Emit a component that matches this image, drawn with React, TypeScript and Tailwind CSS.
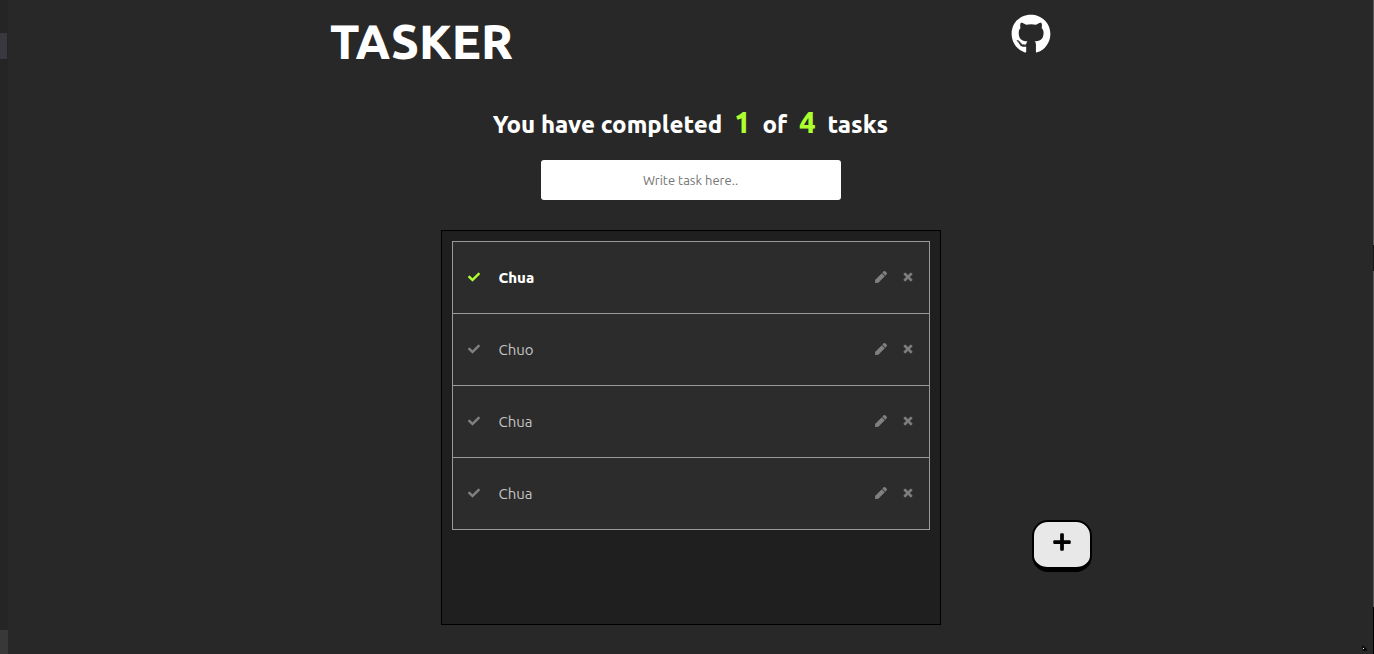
import { useState } from "react";
import { FaCheck, FaGithub, FaPen, FaPlus, FaTimes } from "react-icons/fa";

type Task = { id: number; name: string; done: boolean };

const initialTasks: Task[] = [
  { id: 1, name: "Chua", done: true },
  { id: 2, name: "Chuo", done: false },
  { id: 3, name: "Chua", done: false },
  { id: 4, name: "Chua", done: false },
];

function TaskRow({
  task,
  onToggle,
  onRemove,
}: {
  task: Task;
  onToggle: () => void;
  onRemove: () => void;
}) {
  return (
    <li className="flex h-[72px] items-center border-b border-[#999] bg-[#2c2c2c] px-[15px]">
      <button
        type="button"
        aria-label="Complete task"
        onClick={onToggle}
        className={task.done ? "pb-0.5 text-[#adff2f]" : "pb-0.5 text-[#808080]"}
      >
        <FaCheck size={12} />
      </button>
      <span
        className={
          task.done
            ? "ml-[19px] flex-1 pt-0.5 text-[15px] font-extrabold text-white"
            : "ml-[19px] flex-1 pt-0.5 text-[15px] text-[#c4c4c4]"
        }
      >
        {task.name}
      </span>
      <div className="flex items-center gap-[15px] pb-0.5 text-[#808080]">
        <button type="button" aria-label="Edit task">
          <FaPen size={12} />
        </button>
        <button type="button" aria-label="Delete task" onClick={onRemove}>
          <FaTimes size={12} strokeWidth={24} className="overflow-visible" />
        </button>
      </div>
    </li>
  );
}

export default function App() {
  const [tasks, setTasks] = useState(initialTasks);
  const [draft, setDraft] = useState("");
  const completed = tasks.filter((task) => task.done).length;

  const addTask = () => {
    if (!draft.trim()) return;
    setTasks([...tasks, { id: Date.now(), name: draft, done: false }]);
    setDraft("");
  };

  return (
    <div className="flex min-h-screen bg-[#282828] font-['Ubuntu','Noto_Sans',sans-serif] text-white">
      <div className="flex w-2 flex-col justify-between bg-[#252525] pt-[33px]">
        <div className="h-[26px] w-[7px] bg-[#39383e]" />
        <div className="h-6 bg-[#383838]" />
      </div>

      <div className="relative flex min-w-0 flex-1 flex-col pb-[29px]">
        <header className="mx-auto flex h-[84px] w-full max-w-[721px] items-start justify-between">
          <h1 className="pt-[11px] text-5xl leading-[60px] font-extrabold">TASKER</h1>
          <a href="https://github.com" aria-label="GitHub" className="pt-[14px]">
            <FaGithub size={40} />
          </a>
        </header>

        <h2 className="flex h-[76px] items-baseline justify-center pt-[18px] text-2xl leading-10 font-extrabold">
          You have completed
          <span className="mx-3 text-[29px] text-[#adff2f]">{completed}</span>
          of
          <span className="mx-3 text-[29px] text-[#adff2f]">{tasks.length}</span>
          tasks
        </h2>

        <input
          type="text"
          aria-label="Task"
          placeholder="Write task here.."
          value={draft}
          onChange={(event) => setDraft(event.target.value)}
          className="mx-auto h-10 w-[300px] rounded-[3px] bg-white text-center text-[13px] text-black placeholder:text-[#757575]"
        />

        <div className="mt-[30px] grid flex-1 grid-cols-[1fr_500px_1fr]">
          <main className="col-start-2 border border-black bg-[#1f1f1f] p-[10px]">
            <ul className="border border-b-0 border-[#999]">
              {tasks.map((task) => (
                <TaskRow
                  key={task.id}
                  task={task}
                  onToggle={() =>
                    setTasks(tasks.map((t) => (t.id === task.id ? { ...t, done: !t.done } : t)))
                  }
                  onRemove={() => setTasks(tasks.filter((t) => t.id !== task.id))}
                />
              ))}
            </ul>
          </main>
          <button
            type="button"
            aria-label="Add task"
            onClick={addTask}
            className="mb-[53px] ml-[91px] flex h-[52px] w-[60px] items-center justify-center self-end rounded-2xl border-2 border-b-[5px] border-black bg-[#e8e8e8] pb-1.5 text-black"
          >
            <FaPlus size={20} />
          </button>
        </div>

        <svg
          viewBox="0 0 5 6"
          className="absolute right-[6px] bottom-[3px] h-[6px] w-[5px]"
          aria-hidden="true"
        >
          <path d="M0 0L5 4V6H1Z" fill="#0a0a0a" />
          <rect x="1" y="3" width="1" height="1" fill="#fff" />
        </svg>
      </div>

      <div className="flex w-px flex-col bg-[#5a5a5a]">
        <div className="mt-[245px] h-[26px] bg-[#181818]" />
        <div className="mt-auto h-[47px] bg-black" />
      </div>
    </div>
  );
}
